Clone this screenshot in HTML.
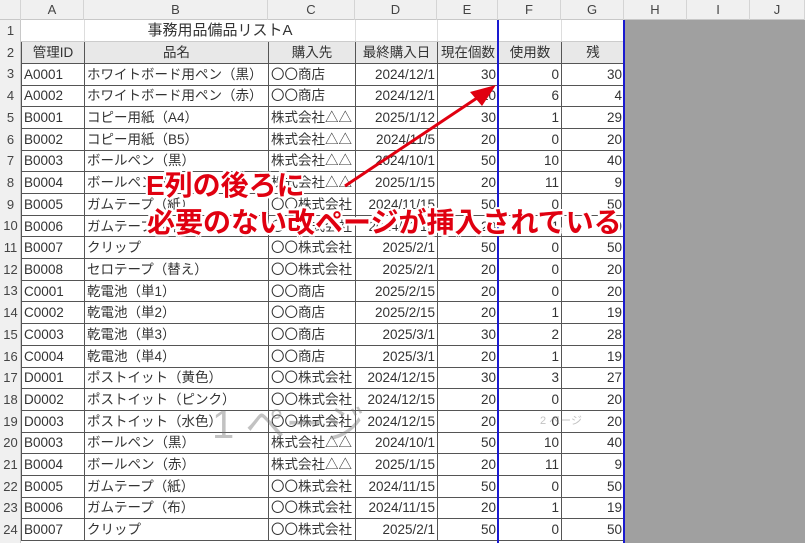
<!DOCTYPE html><html><head><meta charset="utf-8"><style>
*{margin:0;padding:0;box-sizing:border-box}
body{width:805px;height:543px;overflow:hidden;background:#fff;position:relative;font-family:"Liberation Sans","Noto Sans CJK JP",sans-serif;color:#333}
#gray{position:absolute;left:624px;top:20px;width:181px;height:523px;background:#a0a0a0}
#hdr{position:absolute;left:0;top:0;width:805px;height:20px;background:#f0f0f0;border-bottom:1px solid #c8c8c8}
#hdr div{position:absolute;top:0;height:20px;line-height:20px;text-align:center;font-size:13px;color:#444;border-right:1px solid #d4d4d4}
#rh{position:absolute;left:0;top:20px;width:21px;height:523px;background:#f0f0f0;border-right:1px solid #c8c8c8}
table{position:absolute;left:21px;top:20px;width:603px;border-collapse:collapse;table-layout:fixed;font-size:13.5px}
td{height:21.7px;border:1px solid #555;padding:0 2px;white-space:nowrap;overflow:hidden;line-height:19px}
td.r{text-align:right}
tr.h td{background:#e8e8e8;text-align:center}
tr.t td{border:none;border-right:1px solid #ddd;border-bottom:1px solid #ccc;font-size:15px;text-align:center}
.rn{position:absolute;left:0;width:21px;text-align:center;font-size:13px;color:#444;height:21.7px;line-height:21.7px}
.bl{position:absolute;top:20px;width:2px;height:523px;background:#1a1ad0}
.ann{position:absolute;color:#e00010;font-size:28px;font-weight:bold;white-space:nowrap;text-shadow:2px 0 #fff,-2px 0 #fff,0 2px #fff,0 -2px #fff,2px 2px #fff,-2px -2px #fff,2px -2px #fff,-2px 2px #fff}
.wm{position:absolute;color:rgba(120,120,120,.45);white-space:nowrap}
</style></head><body>
<div id="gray"></div>
<div id="hdr">
<div style="left:0;width:21px"></div>
<div style="left:21px;width:63px">A</div><div style="left:84px;width:184px">B</div><div style="left:268px;width:87px">C</div><div style="left:355px;width:82px">D</div><div style="left:437px;width:61px">E</div><div style="left:498px;width:63px">F</div><div style="left:561px;width:63px">G</div><div style="left:624px;width:63px">H</div><div style="left:687px;width:63px">I</div><div style="left:750px;width:55px">J</div>
</div>
<div id="rh"></div>
<table>
<colgroup><col style="width:63px"><col style="width:184px"><col style="width:87px"><col style="width:82px"><col style="width:61px"><col style="width:63px"><col style="width:63px"></colgroup>
<tr class="t"><td></td><td colspan="2">事務用品備品リストA</td><td></td><td></td><td></td><td></td></tr>
<tr class="h"><td>管理ID</td><td>品名</td><td>購入先</td><td>最終購入日</td><td>現在個数</td><td>使用数</td><td>残</td></tr>
<tr><td>A0001</td><td>ホワイトボード用ペン（黒）</td><td>〇〇商店</td><td class="r">2024/12/1</td><td class="r">30</td><td class="r">0</td><td class="r">30</td></tr>
<tr><td>A0002</td><td>ホワイトボード用ペン（赤）</td><td>〇〇商店</td><td class="r">2024/12/1</td><td class="r">10</td><td class="r">6</td><td class="r">4</td></tr>
<tr><td>B0001</td><td>コピー用紙（A4）</td><td>株式会社△△</td><td class="r">2025/1/12</td><td class="r">30</td><td class="r">1</td><td class="r">29</td></tr>
<tr><td>B0002</td><td>コピー用紙（B5）</td><td>株式会社△△</td><td class="r">2024/11/5</td><td class="r">20</td><td class="r">0</td><td class="r">20</td></tr>
<tr><td>B0003</td><td>ボールペン（黒）</td><td>株式会社△△</td><td class="r">2024/10/1</td><td class="r">50</td><td class="r">10</td><td class="r">40</td></tr>
<tr><td>B0004</td><td>ボールペン（赤）</td><td>株式会社△△</td><td class="r">2025/1/15</td><td class="r">20</td><td class="r">11</td><td class="r">9</td></tr>
<tr><td>B0005</td><td>ガムテープ（紙）</td><td>〇〇株式会社</td><td class="r">2024/11/15</td><td class="r">50</td><td class="r">0</td><td class="r">50</td></tr>
<tr><td>B0006</td><td>ガムテープ（布）</td><td>〇〇株式会社</td><td class="r">2024/11/15</td><td class="r">20</td><td class="r">1</td><td class="r">19</td></tr>
<tr><td>B0007</td><td>クリップ</td><td>〇〇株式会社</td><td class="r">2025/2/1</td><td class="r">50</td><td class="r">0</td><td class="r">50</td></tr>
<tr><td>B0008</td><td>セロテープ（替え）</td><td>〇〇株式会社</td><td class="r">2025/2/1</td><td class="r">20</td><td class="r">0</td><td class="r">20</td></tr>
<tr><td>C0001</td><td>乾電池（単1）</td><td>〇〇商店</td><td class="r">2025/2/15</td><td class="r">20</td><td class="r">0</td><td class="r">20</td></tr>
<tr><td>C0002</td><td>乾電池（単2）</td><td>〇〇商店</td><td class="r">2025/2/15</td><td class="r">20</td><td class="r">1</td><td class="r">19</td></tr>
<tr><td>C0003</td><td>乾電池（単3）</td><td>〇〇商店</td><td class="r">2025/3/1</td><td class="r">30</td><td class="r">2</td><td class="r">28</td></tr>
<tr><td>C0004</td><td>乾電池（単4）</td><td>〇〇商店</td><td class="r">2025/3/1</td><td class="r">20</td><td class="r">1</td><td class="r">19</td></tr>
<tr><td>D0001</td><td>ポストイット（黄色）</td><td>〇〇株式会社</td><td class="r">2024/12/15</td><td class="r">30</td><td class="r">3</td><td class="r">27</td></tr>
<tr><td>D0002</td><td>ポストイット（ピンク）</td><td>〇〇株式会社</td><td class="r">2024/12/15</td><td class="r">20</td><td class="r">0</td><td class="r">20</td></tr>
<tr><td>D0003</td><td>ポストイット（水色）</td><td>〇〇株式会社</td><td class="r">2024/12/15</td><td class="r">20</td><td class="r">0</td><td class="r">20</td></tr>
<tr><td>B0003</td><td>ボールペン（黒）</td><td>株式会社△△</td><td class="r">2024/10/1</td><td class="r">50</td><td class="r">10</td><td class="r">40</td></tr>
<tr><td>B0004</td><td>ボールペン（赤）</td><td>株式会社△△</td><td class="r">2025/1/15</td><td class="r">20</td><td class="r">11</td><td class="r">9</td></tr>
<tr><td>B0005</td><td>ガムテープ（紙）</td><td>〇〇株式会社</td><td class="r">2024/11/15</td><td class="r">50</td><td class="r">0</td><td class="r">50</td></tr>
<tr><td>B0006</td><td>ガムテープ（布）</td><td>〇〇株式会社</td><td class="r">2024/11/15</td><td class="r">20</td><td class="r">1</td><td class="r">19</td></tr>
<tr><td>B0007</td><td>クリップ</td><td>〇〇株式会社</td><td class="r">2025/2/1</td><td class="r">50</td><td class="r">0</td><td class="r">50</td></tr>
</table>
<div class="rn" style="top:20px">1</div><div class="rn" style="top:41.7px">2</div><div class="rn" style="top:63.4px">3</div><div class="rn" style="top:85.1px">4</div><div class="rn" style="top:106.8px">5</div><div class="rn" style="top:128.5px">6</div><div class="rn" style="top:150.2px">7</div><div class="rn" style="top:171.9px">8</div><div class="rn" style="top:193.6px">9</div><div class="rn" style="top:215.3px">10</div><div class="rn" style="top:237px">11</div><div class="rn" style="top:258.7px">12</div><div class="rn" style="top:280.4px">13</div><div class="rn" style="top:302.1px">14</div><div class="rn" style="top:323.8px">15</div><div class="rn" style="top:345.5px">16</div><div class="rn" style="top:367.2px">17</div><div class="rn" style="top:388.9px">18</div><div class="rn" style="top:410.6px">19</div><div class="rn" style="top:432.3px">20</div><div class="rn" style="top:454px">21</div><div class="rn" style="top:475.7px">22</div><div class="rn" style="top:497.4px">23</div><div class="rn" style="top:519.1px">24</div>
<div class="bl" style="left:497px"></div><div class="bl" style="left:623px"></div>
<div class="wm" style="left:212px;top:392px;font-size:40px">1 ページ</div>
<div class="wm" style="left:540px;top:412px;font-size:11px">2 ページ</div>
<svg style="position:absolute;left:0;top:0" width="805" height="543"><line x1="345" y1="186" x2="480" y2="96" stroke="#e00010" stroke-width="3"/><polygon points="496,85 470,92 482,106" fill="#e00010"/></svg>
<div class="ann" style="left:146px;top:164px">E列の後ろに</div>
<div class="ann" style="left:147px;top:201px">必要のない改ページが挿入されている</div>
</body></html>
